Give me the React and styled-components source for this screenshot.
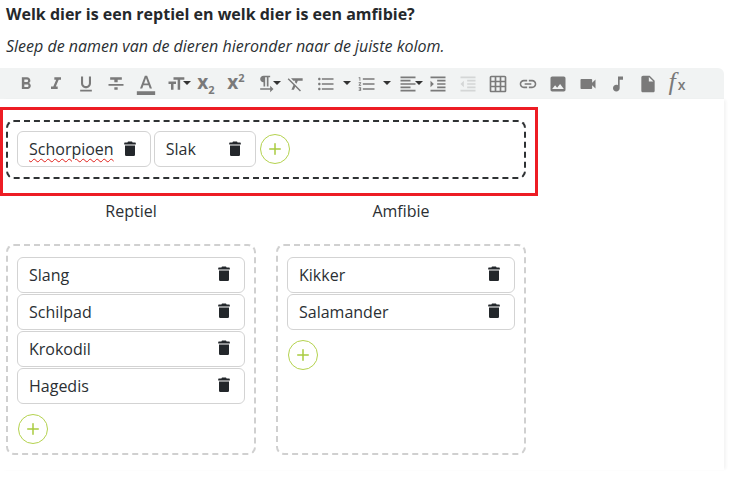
import React from 'react';
import styled, { createGlobalStyle } from 'styled-components';
import { Plus } from 'lucide-react';
import {
  MdFormatBold,
  MdFormatItalic,
  MdFormatUnderlined,
  MdFormatStrikethrough,
  MdFormatColorText,
  MdFormatSize,
  MdFormatTextdirectionLToR,
  MdFormatClear,
  MdFormatListBulleted,
  MdFormatListNumbered,
  MdFormatAlignLeft,
  MdFormatIndentIncrease,
  MdFormatIndentDecrease,
  MdGridOn,
  MdLink,
  MdImage,
  MdVideocam,
  MdMusicNote,
  MdInsertDriveFile,
} from 'react-icons/md';

const GlobalStyle = createGlobalStyle`
  html, body {
    margin: 0;
    padding: 0;
    background: #fff;
  }
  body {
    font-family: "Open Sans", "Liberation Sans", sans-serif;
    font-size: 16px;
    color: #2b2f33;
  }
`;

const Page = styled.div`
  width: 731px;
  height: 480px;
  overflow: hidden;
`;

const Intro = styled.div`
  padding: 3px 6px 0;
`;

const Title = styled.h1`
  margin: 0 0 10px;
  font-size: 16px;
  line-height: 22px;
  font-weight: 700;
  color: #25282b;
`;

const Hint = styled.p`
  margin: 0 0 11px;
  font-size: 16px;
  line-height: 22px;
  font-style: italic;
`;

const Toolbar = styled.div`
  width: 724px;
  height: 31px;
  box-sizing: border-box;
  padding-left: 11px;
  display: flex;
  align-items: center;
  background: #f1f3f3;
  border-top-right-radius: 6px;
  color: #7a7a7a;
`;

const ToolButton = styled.span`
  position: relative;
  flex: none;
  width: ${(p) => (p.$wide ? 41 : 30)}px;
  height: 31px;
  box-sizing: border-box;
  padding-right: ${(p) => (p.$wide ? 11 : 0)}px;
  display: flex;
  align-items: center;
  justify-content: center;
  color: ${(p) => (p.$disabled ? '#d4d6d6' : 'inherit')};
`;

const Caret = styled.i`
  position: absolute;
  top: 13px;
  right: ${(p) => p.$right}px;
  width: 0;
  height: 0;
  border-left: 4px solid transparent;
  border-right: 4px solid transparent;
  border-top: 4px solid #333;
`;

const ScriptIcon = styled.span`
  font-weight: 700;
  font-size: 19px;
  line-height: 1;
  position: relative;
  top: -1px;

  sub, sup {
    font-size: 11px;
    line-height: 0;
  }
`;

const FxIcon = styled.span`
  font-family: "Liberation Serif", serif;
  font-style: italic;
  font-size: 26px;
  line-height: 1;
  position: relative;
  top: -2px;
  left: -1px;

  b {
    font-family: "Open Sans", sans-serif;
    font-style: normal;
    font-size: 14px;
    font-weight: 600;
    margin-left: 2px;
  }
`;

const EditorBody = styled.div`
  width: 724px;
  height: 371px;
  box-sizing: border-box;
  padding-top: 8px;
  box-shadow: 3px 0 3px -1px rgba(0, 0, 0, 0.05);
`;

const Highlight = styled.div`
  width: 538px;
  height: 89px;
  box-sizing: border-box;
  padding: 10px 9px 0 3px;
  border: 3px solid #ed1c24;
`;

const SourceZone = styled.div`
  height: 59px;
  box-sizing: border-box;
  padding: 9px;
  display: flex;
  align-items: flex-start;
  gap: 3px;
  border: 2px dashed #2f3234;
  border-radius: 8px;
`;

const Columns = styled.div`
  width: 520px;
  margin-left: 6px;
  display: grid;
  grid-template-columns: 250px 250px;
  column-gap: 20px;
`;

const ColumnLabel = styled.div`
  height: 24px;
  margin: 3px 0 21px;
  line-height: 24px;
  text-align: center;
`;

const ColumnZone = styled.div`
  height: 211px;
  box-sizing: border-box;
  padding: 11px 9px;
  display: flex;
  flex-direction: column;
  gap: 1px;
  border: 2px dashed #d0d0d0;
  border-radius: 8px;
`;

const Chip = styled.div`
  flex: none;
  height: 36px;
  box-sizing: border-box;
  min-width: ${(p) => (p.$inline ? '102px' : '0')};
  padding: 0 14px 0 11px;
  display: flex;
  align-items: center;
  justify-content: space-between;
  gap: 10px;
  background: #fff;
  border: 1px solid #d3d3d3;
  border-radius: 6px;
`;

const Name = styled.span`
  line-height: 22px;
  text-decoration: ${(p) => (p.$misspelled ? 'underline wavy #e0201a 1.3px' : 'none')};
  text-underline-offset: 3px;
`;

const TrashIcon = styled.svg`
  flex: none;
  width: 12px;
  height: 15px;
  margin-bottom: ${(p) => (p.$inline ? 2 : 3)}px;
  fill: #23272b;
`;

const AddButton = styled.button`
  flex: none;
  width: 30px;
  height: 30px;
  margin: ${(p) => (p.$inline ? '3px 0 0 1px' : '9px 0 0 1px')};
  padding: 0;
  display: flex;
  align-items: center;
  justify-content: center;
  background: #fff;
  color: #a9cb3f;
  border: 1px solid #b4d24e;
  border-radius: 50%;
`;

function Trash({ inline }) {
  return (
    <TrashIcon $inline={inline} viewBox="0 0 12 15">
      <path d="M4 0.4h4l.6 1.2h2.6c.4 0 .6.3.6.6v1.3H.2V2.2c0-.3.2-.6.6-.6h2.6z" />
      <path d="M1 4.4h10v9c0 .9-.7 1.6-1.6 1.6H2.6C1.7 15 1 14.3 1 13.4z" />
    </TrashIcon>
  );
}

function AnimalChip({ name, inline, misspelled }) {
  return (
    <Chip $inline={inline}>
      <Name $misspelled={misspelled}>{name}</Name>
      <Trash inline={inline} />
    </Chip>
  );
}

function Add({ inline }) {
  return (
    <AddButton $inline={inline}>
      <Plus size={18} strokeWidth={2} />
    </AddButton>
  );
}

const columns = [
  { label: 'Reptiel', animals: ['Slang', 'Schilpad', 'Krokodil', 'Hagedis'] },
  { label: 'Amfibie', animals: ['Kikker', 'Salamander'] },
];

export default function App() {
  return (
    <Page>
      <GlobalStyle />
      <Intro>
        <Title>Welk dier is een reptiel en welk dier is een amfibie?</Title>
        <Hint>Sleep de namen van de dieren hieronder naar de juiste kolom.</Hint>
      </Intro>
      <Toolbar>
        <ToolButton><MdFormatBold size={20} /></ToolButton>
        <ToolButton><MdFormatItalic size={20} /></ToolButton>
        <ToolButton><MdFormatUnderlined size={20} /></ToolButton>
        <ToolButton><MdFormatStrikethrough size={20} /></ToolButton>
        <ToolButton><MdFormatColorText size={22} /></ToolButton>
        <ToolButton><MdFormatSize size={20} /><Caret $right={0} /></ToolButton>
        <ToolButton><ScriptIcon>x<sub>2</sub></ScriptIcon></ToolButton>
        <ToolButton><ScriptIcon>x<sup>2</sup></ScriptIcon></ToolButton>
        <ToolButton><MdFormatTextdirectionLToR size={20} /><Caret $right={0} /></ToolButton>
        <ToolButton><MdFormatClear size={20} /></ToolButton>
        <ToolButton $wide><MdFormatListBulleted size={20} /><Caret $right={1} /></ToolButton>
        <ToolButton $wide><MdFormatListNumbered size={20} /><Caret $right={2} /></ToolButton>
        <ToolButton><MdFormatAlignLeft size={20} /><Caret $right={0} /></ToolButton>
        <ToolButton><MdFormatIndentIncrease size={20} /></ToolButton>
        <ToolButton $disabled><MdFormatIndentDecrease size={20} /></ToolButton>
        <ToolButton><MdGridOn size={20} /></ToolButton>
        <ToolButton><MdLink size={20} /></ToolButton>
        <ToolButton><MdImage size={20} /></ToolButton>
        <ToolButton><MdVideocam size={20} /></ToolButton>
        <ToolButton><MdMusicNote size={20} /></ToolButton>
        <ToolButton><MdInsertDriveFile size={20} /></ToolButton>
        <ToolButton><FxIcon>f<b>x</b></FxIcon></ToolButton>
      </Toolbar>
      <EditorBody>
        <Highlight>
          <SourceZone>
            <AnimalChip name="Schorpioen" inline misspelled />
            <AnimalChip name="Slak" inline />
            <Add inline />
          </SourceZone>
        </Highlight>
        <Columns>
          {columns.map((col) => (
            <div key={col.label}>
              <ColumnLabel>{col.label}</ColumnLabel>
              <ColumnZone>
                {col.animals.map((animal) => (
                  <AnimalChip key={animal} name={animal} />
                ))}
                <Add />
              </ColumnZone>
            </div>
          ))}
        </Columns>
      </EditorBody>
    </Page>
  );
}
